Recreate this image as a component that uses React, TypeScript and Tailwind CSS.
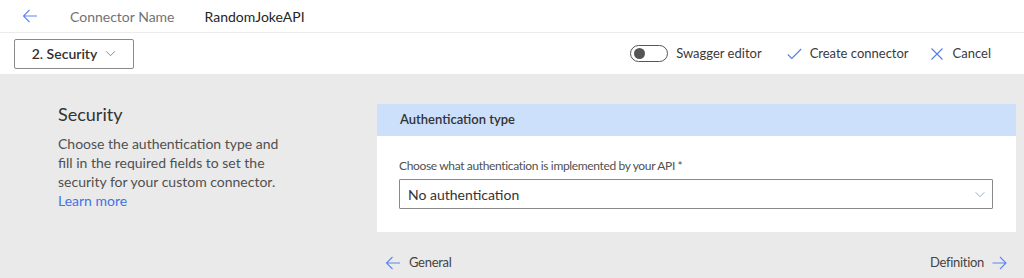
import React from "react";

const font = { fontFamily: '"Segoe UI", Lato, "Noto Sans", sans-serif' };

function ArrowLeft({ className = "" }: { className?: string }) {
  return (
    <svg className={className} viewBox="0 0 16 16" fill="none" stroke="currentColor" strokeWidth="1.1">
      <path d="M15 8H1.5M7.5 2L1.5 8l6 6" />
    </svg>
  );
}
function ArrowRight({ className = "" }: { className?: string }) {
  return (
    <svg className={className} viewBox="0 0 16 16" fill="none" stroke="currentColor" strokeWidth="1.1">
      <path d="M1 8h13.5M8.5 2l6 6-6 6" />
    </svg>
  );
}
function Chevron({ className = "" }: { className?: string }) {
  return (
    <svg className={className} viewBox="0 0 12 8" fill="none" stroke="currentColor" strokeWidth="1">
      <path d="M1 1.5l5 5 5-5" />
    </svg>
  );
}

export default function App() {
  return (
    <div className="w-[1024px] h-[278px] bg-[#eaeaea] text-[#323130] overflow-hidden" style={font}>
      <div className="h-[33px] bg-white border-b border-[#ececec] flex items-center">
        <ArrowLeft className="w-[16px] h-[16px] text-[#5c86f0] ml-[22px]" />
        <span className="ml-[32px] text-[14px] text-[#737373]">Connector Name</span>
        <span className="ml-[30px] text-[14px] text-[#252525]">RandomJokeAPI</span>
      </div>
      <div className="h-[41px] bg-white flex items-center">
        <div className="ml-[14px] w-[120px] h-[30px] border border-[#8a8a8a] rounded-[2px] flex items-center justify-center gap-[8px]">
          <span className="text-[14px] font-semibold text-[#323130]">2. Security</span>
          <Chevron className="w-[11px] h-[7px] text-[#777]" />
        </div>
        <div className="ml-auto flex items-center mr-[33px]">
          <div className="w-[38px] h-[17px] rounded-full border border-[#555] flex items-center pl-[3px]">
            <div className="w-[11px] h-[11px] rounded-full bg-[#555]" />
          </div>
          <span className="ml-[8px] text-[13px] text-[#3b3a39]">Swagger editor</span>
          <svg className="ml-[25px] w-[15px] h-[12px] text-[#4f7cf0]" viewBox="0 0 15 12" fill="none" stroke="currentColor" strokeWidth="1.1">
            <path d="M0.8 6.5l4 4L14.2 1" />
          </svg>
          <span className="ml-[8px] text-[13px] text-[#3b3a39]">Create connector</span>
          <svg className="ml-[22px] w-[12px] h-[12px] text-[#4f7cf0]" viewBox="0 0 12 12" fill="none" stroke="currentColor" strokeWidth="1.1">
            <path d="M0.5 0.5l11 11M11.5 0.5l-11 11" />
          </svg>
          <span className="ml-[10px] text-[13px] text-[#3b3a39]">Cancel</span>
        </div>
      </div>
      <div className="flex pt-[30px]">
        <div className="w-[377px] shrink-0 pl-[58px]">
          <div className="text-[18px] leading-[22px] text-[#333] -mt-[1px]">Security</div>
          <p className="mt-[9px] text-[14px] leading-[19px] text-[#505050] w-[232px]">
            Choose the authentication type and fill in the required fields to set the security for your custom connector.{" "}
            <span className="text-[#3f74e6]">Learn more</span>
          </p>
        </div>
        <div className="w-[639px] shrink-0 flex flex-col">
          <div className="bg-white">
            <div className="h-[32px] bg-[#cce0fc] flex items-center px-[23px]">
              <span className="text-[13px] font-semibold text-[#333]">Authentication type</span>
            </div>
            <div className="px-[22px] pt-[22px] pb-[23px]">
              <div className="text-[12px] leading-[16px] text-[#505050] tracking-[-0.35px]">
                Choose what authentication is implemented by your API *
              </div>
              <div className="mt-[5px] h-[30px] w-[594px] border border-[#8a8a8a] rounded-[1px] flex items-center pl-[8px] pr-[6px]">
                <span className="text-[14px] text-[#333]">No authentication</span>
                <Chevron className="ml-auto w-[12px] h-[7px] text-[#8aa0b8]" />
              </div>
            </div>
          </div>
          <div className="flex items-center justify-between mt-[21px] pl-[8px] pr-[8px]">
            <div className="flex items-center">
              <ArrowLeft className="w-[16px] h-[16px] text-[#5c86f0]" />
              <span className="ml-[8px] text-[13px] text-[#444] tracking-[-0.3px]">General</span>
            </div>
            <div className="flex items-center">
              <span className="text-[13px] text-[#444] tracking-[-0.3px]">Definition</span>
              <ArrowRight className="ml-[7px] w-[17px] h-[16px] text-[#5c86f0]" />
            </div>
          </div>
        </div>
      </div>
    </div>
  );
}
